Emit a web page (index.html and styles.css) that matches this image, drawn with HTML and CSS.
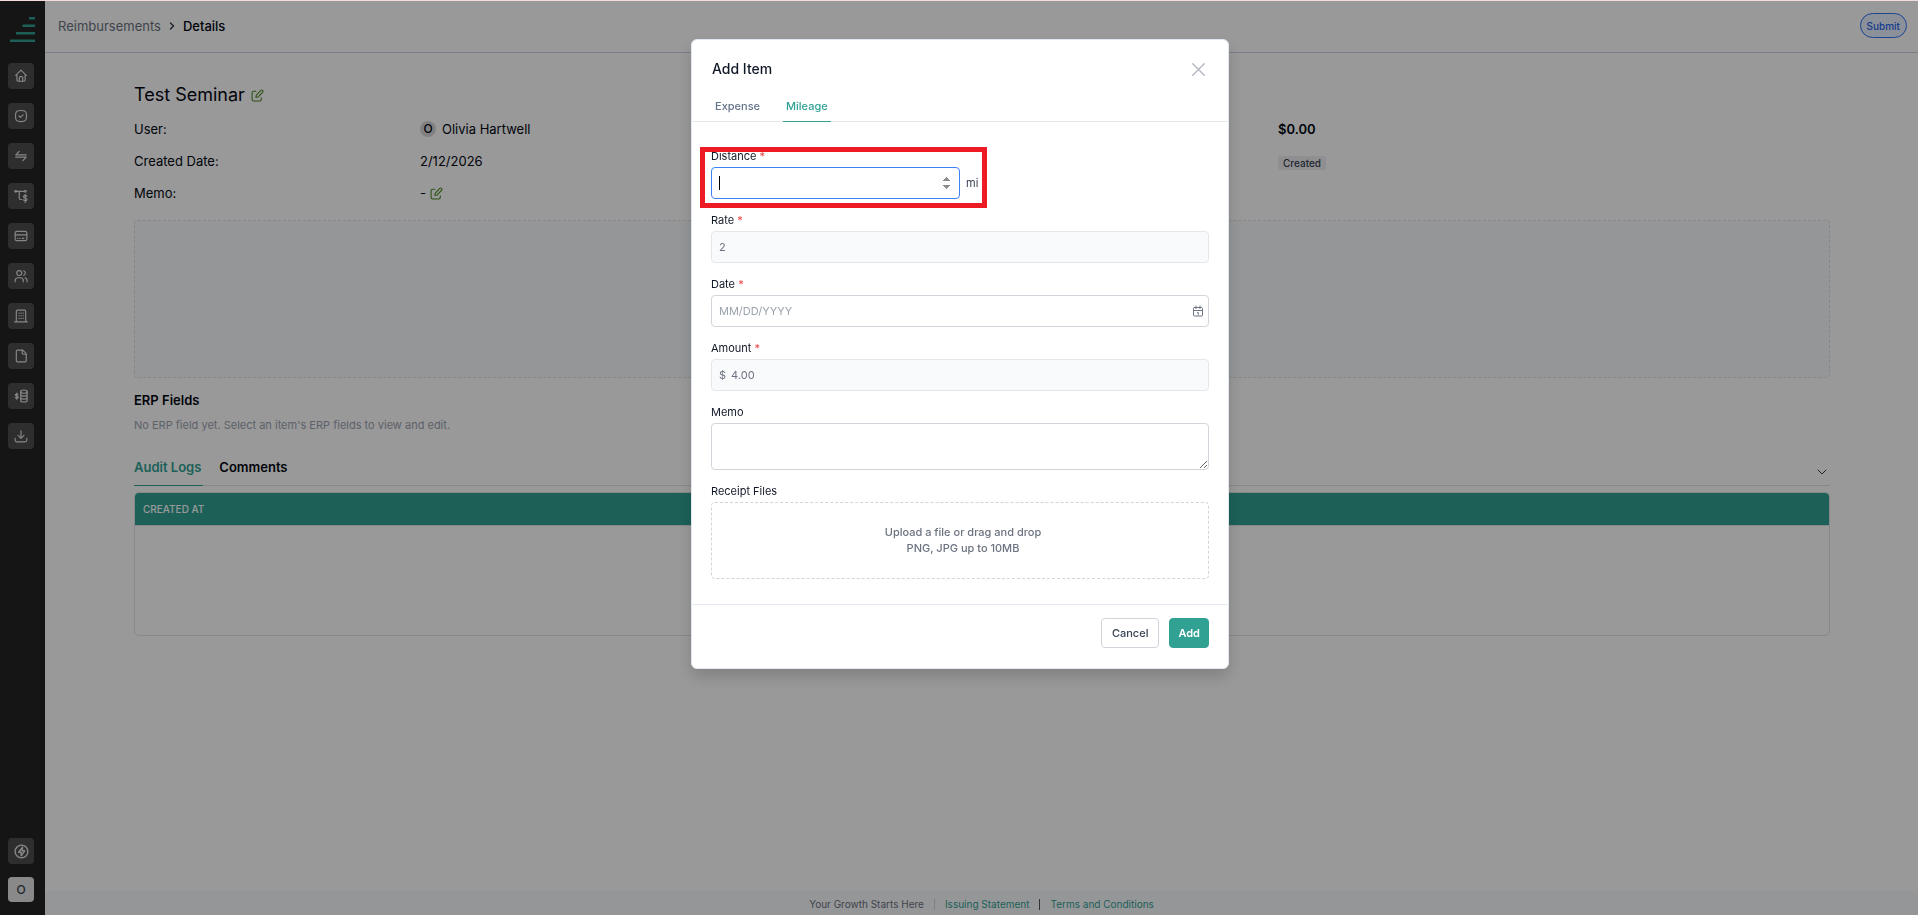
FILE: index.html
```html
<!DOCTYPE html>
<html lang="en">
<head>
<meta charset="utf-8">
<title>Reimbursement Details</title>
<link rel="stylesheet" href="styles.css">
</head>
<body>
<svg class="sprite" aria-hidden="true">
  <symbol id="i-edit" viewBox="0 0 24 24"><path d="M9 4H5a3 3 0 0 0-3 3v12a3 3 0 0 0 3 3h11a3 3 0 0 0 3-3v-3"/><path d="M9 15.500l.8-4.200L18 2.600a2 2 0 0 1 2.900 0l.6.600a2 2 0 0 1 0 2.800l-8.300 8.700z"/></symbol>
</svg>
<div class="app">
  <aside class="sidebar">
    <a class="logo" href="#" aria-label="Home page">
      <svg viewBox="0 0 25 25"><path d="M19 0h6v2.500h-6zM12.500 7.500H25V10H12.500zM6 15h19v2.500H6zM0 22.500h25V25H0z"/></svg>
    </a>
    <nav class="nav">
      <a class="tile" href="#" aria-label="Home"><svg viewBox="0 0 24 24"><path d="M5 11H3l9-9 9 9h-2v8a2 2 0 0 1-2 2H7a2 2 0 0 1-2-2z"/><path d="M9 21v-6a2 2 0 0 1 2-2h2a2 2 0 0 1 2 2v6"/></svg></a>
      <a class="tile" href="#" aria-label="Approvals"><svg viewBox="0 0 24 24"><path d="M12 2.500c7.600 0 9.500 1.900 9.500 9.500s-1.900 9.500-9.500 9.500S2.500 19.600 2.500 12 4.400 2.500 12 2.500z"/><path d="M8.500 12l2.500 2.500 4.500-4.500"/></svg></a>
      <a class="tile" href="#" aria-label="Transactions"><svg viewBox="0 0 24 24"><path d="M21 10H3l6-6M3 14h18l-6 6"/></svg></a>
      <a class="tile" href="#" aria-label="Payment flow"><svg viewBox="0 0 24 24"><path d="M2 4h17M9 4v12a2 2 0 0 0 2 2h2"/><circle cx="3" cy="4" r="1.500"/><circle cx="19.500" cy="4" r="1.500"/><path d="M22 12.500c-.5-1-1.500-1.500-2.800-1.500-1.700 0-2.900.8-2.900 2.200 0 3.200 6 1.400 6 4.700 0 1.400-1.300 2.300-3.100 2.300-1.500 0-2.600-.6-3.100-1.700M19.200 9v14"/></svg></a>
      <a class="tile" href="#" aria-label="Cards"><svg viewBox="0 0 24 24"><rect x="2" y="4" width="20" height="16" rx="3"/><path d="M2 10h20M6 16h.5M10 16h.5M14 16h3"/></svg></a>
      <a class="tile" href="#" aria-label="Users"><svg viewBox="0 0 24 24"><circle cx="9" cy="7" r="4.200"/><path d="M2 22v-2a5 5 0 0 1 5-5h4a5 5 0 0 1 5 5v2M16.500 3a4.200 4.200 0 0 1 0 8M22.500 22v-2a5 5 0 0 0-3.500-4.800"/></svg></a>
      <a class="tile" href="#" aria-label="Company"><svg viewBox="0 0 24 24"><path d="M1 22h22M4 22V4a2 2 0 0 1 2-2h12a2 2 0 0 1 2 2v18M8.500 7h.5M12 7h.5M15.500 7h.5M8.500 11.500h.5M12 11.500h.5M15.500 11.500h.5M8.500 16h.5M12 16h.5M15.500 16h.5"/></svg></a>
      <a class="tile" href="#" aria-label="Documents"><svg viewBox="0 0 24 24"><path d="M14 2v5a2 2 0 0 0 2 2h5"/><path d="M19 22H6a2 2 0 0 1-2-2V4a2 2 0 0 1 2-2h9l6 6v12a2 2 0 0 1-2 2z"/></svg></a>
      <a class="tile" href="#" aria-label="Funds"><svg viewBox="0 0 24 24"><ellipse cx="17" cy="4.500" rx="5.500" ry="2.800"/><path d="M11.500 4.500v15c0 1.500 2.500 2.800 5.500 2.800s5.500-1.300 5.500-2.800v-15M11.500 9.500c0 1.500 2.500 2.800 5.500 2.800s5.500-1.300 5.500-2.800M11.500 14.500c0 1.500 2.500 2.800 5.500 2.800s5.500-1.300 5.500-2.800"/><path d="M7 9.500c-.6-.8-1.400-1-2.300-1-1.400 0-2.400.6-2.400 1.700 0 2.500 5 1.200 5 3.800 0 1.200-1.100 1.800-2.600 1.800-1.200 0-2.200-.4-2.700-1.300M4.700 7v10.500"/></svg></a>
      <a class="tile" href="#" aria-label="Downloads"><svg viewBox="0 0 24 24"><path d="M2 16v3a3 3 0 0 0 3 3h14a3 3 0 0 0 3-3v-3M7 11l5 5 5-5M12 3v13"/></svg></a>
    </nav>
    <div class="side-end">
      <button class="tile tile-large" type="button" aria-label="Quick actions"><svg viewBox="0 0 24 24"><circle cx="12" cy="12" r="9"/><path d="M13.500 6L8 13h3.500v5l5-7H13z"/></svg></button>
      <button class="tile avatar" type="button">O</button>
    </div>
  </aside>

  <div class="page">
    <header class="topbar">
      <nav class="crumbs" aria-label="Breadcrumb">
        <a href="#">Reimbursements</a>
        <svg viewBox="0 0 24 24"><path d="M9 6l6 6-6 6"/></svg>
        <span class="here">Details</span>
      </nav>
      <button class="submit" type="button">Submit</button>
    </header>

    <main class="content">
      <h1 class="title">Test Seminar <button class="edit" type="button" aria-label="Edit title"><svg><use href="#i-edit"/></svg></button></h1>
      <div class="info">
        <span>User:</span>
        <span class="person"><i class="initial">O</i>Olivia Hartwell</span>
        <strong class="total">$0.00</strong>
        <span>Created Date:</span>
        <span>2/12/2026</span>
        <span class="total"><span class="badge">Created</span></span>
        <span>Memo:</span>
        <span class="person memo-value">-<button class="edit" type="button" aria-label="Edit memo"><svg><use href="#i-edit"/></svg></button></span>
      </div>
      <div class="items"></div>
      <h2 class="section">ERP Fields</h2>
      <p class="note">No ERP field yet. Select an item's ERP fields to view and edit.</p>
      <div class="log-tabs">
        <button class="log-tab active" type="button">Audit Logs</button>
        <button class="log-tab" type="button">Comments</button>
        <button class="collapse" type="button" aria-label="Collapse"><svg viewBox="0 0 24 24"><path d="M4 8l8 8 8-8"/></svg></button>
      </div>
      <div class="log">
        <table>
          <thead><tr><th scope="col">CREATED AT</th></tr></thead>
        </table>
      </div>
    </main>

    <footer class="footer">
      <span>Your Growth Starts Here</span>
      <i class="bar"></i>
      <a href="#">Issuing Statement</a>
      <i class="bar bar-dark"></i>
      <a href="#">Terms and Conditions</a>
    </footer>
  </div>
</div>

<div class="backdrop">
  <form class="modal" role="dialog" aria-labelledby="modal-title">
    <div class="modal-head">
      <h2 id="modal-title">Add Item</h2>
      <button class="close" type="button" aria-label="Close"><svg viewBox="0 0 12 12"><path d="M.7.700l10.600 10.600M11.300.700L.7 11.300"/></svg></button>
    </div>
    <div class="tabs">
      <button class="tab" type="button">Expense</button>
      <button class="tab active" type="button">Mileage</button>
    </div>
    <div class="fields">
      <div class="field distance">
        <label for="distance">Distance <b>*</b></label>
        <div class="with-unit">
          <div class="number">
            <input class="control" id="distance" type="number">
            <i class="caret"></i>
          </div>
          <span class="unit">mi</span>
        </div>
        <i class="highlight"></i>
      </div>
      <div class="field">
        <label for="rate">Rate <b>*</b></label>
        <input class="control" id="rate" type="text" value="2" disabled>
      </div>
      <div class="field">
        <label for="date">Date <b>*</b></label>
        <div class="control group">
          <input id="date" type="text" placeholder="MM/DD/YYYY">
          <svg viewBox="0 0 24 24"><rect x="3" y="5" width="18" height="17" rx="2"/><path d="M3 11h18M8 2v5M16 2v5M11 15h1.500v4"/></svg>
        </div>
      </div>
      <div class="field">
        <label for="amount">Amount <b>*</b></label>
        <div class="control group off">
          <span>$</span>
          <input id="amount" type="text" value="4.00" disabled>
        </div>
      </div>
      <div class="field">
        <label for="memo">Memo</label>
        <textarea class="control" id="memo"></textarea>
      </div>
      <div class="field">
        <label for="files">Receipt Files</label>
        <button class="drop" id="files" type="button">Upload a file or drag and drop<br>PNG, JPG up to 10MB</button>
      </div>
    </div>
    <div class="modal-foot">
      <button class="btn" type="button">Cancel</button>
      <button class="btn primary" type="button">Add</button>
    </div>
  </form>
</div>
</body>
</html>
```

FILE: styles.css
```css
* { box-sizing: border-box; }

body {
  margin: 0;
  border-top: 1px solid #f3dcdc;
  background: #fff;
  color: #030712;
  font: 14px/20px Inter, "Liberation Sans", sans-serif;
}

button, input, textarea { font: inherit; color: inherit; }
button { padding: 0; border: 0; background: none; cursor: pointer; }
a { color: inherit; text-decoration: none; }
svg { display: block; fill: none; stroke: currentColor; stroke-width: 2; stroke-linecap: round; stroke-linejoin: round; }
i { font-style: normal; }
.sprite { position: absolute; width: 0; height: 0; }

.app { display: flex; min-height: calc(100vh - 1px); }

/* Sidebar */
.sidebar {
  display: flex;
  flex-direction: column;
  align-items: flex-start;
  width: 45px;
  padding: 16px 8px 13px;
  background: #232323;
}
.logo { margin: 0 2px 21px; }
.logo svg { width: 25px; height: 25px; fill: #30a193; stroke: none; }
.nav { display: grid; gap: 14px; }
.side-end { display: grid; gap: 13px; margin-top: auto; }
.tile {
  display: grid;
  place-items: center;
  width: 26px;
  height: 26px;
  border-radius: 4px;
  background: #4e4e4e;
  color: #e0e0e0;
}
.tile svg { width: 14px; height: 14px; }
.tile-large svg { width: 17px; height: 17px; }
.avatar { height: 25px; background: #e5e5e5; color: #374151; font-size: 12px; font-weight: 500; }

/* Page */
.page { display: flex; flex: 1; flex-direction: column; min-width: 0; }
.topbar {
  display: flex;
  align-items: center;
  justify-content: space-between;
  height: 52px;
  padding: 0 11px 2px 13px;
  border-bottom: 1px solid #cbd5e1;
}
.crumbs { display: flex; align-items: center; gap: 5px; font-size: 13px; color: #6b7280; }
.crumbs svg { width: 12px; height: 12px; color: #374151; stroke-width: 3; }
.here { color: #030712; font-weight: 500; }
.submit {
  height: 25px;
  padding: 0 6px;
  border: 1px solid #2f74f5;
  border-radius: 13px;
  background: #e8f0ff;
  color: #2563eb;
  font-size: 10px;
  font-weight: 500;
}

.content { flex: 1; padding: 28px 88px 0 89px; }
.title { display: flex; align-items: center; gap: 6px; margin: 0 0 10px; font-size: 18px; line-height: 28px; font-weight: 400; }
.edit { color: #4d8a20; }
.edit svg { width: 13px; height: 13px; stroke-width: 2; }
.info { display: grid; grid-template-columns: repeat(6, 1fr); gap: 12px 20px; font-size: 13px; }
.info > :nth-child(3n + 1) { grid-column: 1; }
.person { display: flex; align-items: center; gap: 6px; }
.memo-value { gap: 4px; }
.initial { width: 16px; border-radius: 8px; background: #d8d8d8; font-size: 12px; line-height: 16px; font-weight: 500; text-align: center; }
.info > .total { grid-column: 5; font-weight: 600; }
.badge { display: inline-block; padding: 0 5px; border-radius: 3px; background: #eeeff2; color: #374151; font-size: 10px; line-height: 14px; font-weight: 500; vertical-align: -1px; }
.items { height: 158px; margin-top: 17px; border: 1px dashed #e0e2e6; border-radius: 4px; background: #f8fafc; }
.section { margin: 12px 0 6px; font-size: 13px; line-height: 20px; font-weight: 600; }
.note { margin: 0; color: #9ca3af; font-size: 11px; line-height: 18px; }
.log-tabs { display: flex; gap: 16px; margin-top: 22px; border-bottom: 1px solid #e1e3e6; }
.log-tab { height: 30px; margin-bottom: -1px; padding: 0 2px 8px 0; border-bottom: 1px solid transparent; font-size: 13px; font-weight: 600; }
.log-tab.active { border-color: #30a193; color: #30a193; }
.collapse { margin-left: auto; padding: 2px 2px 0 0; color: #374151; }
.collapse svg { width: 12px; height: 12px; }
.log { height: 144px; margin-top: 6px; overflow: hidden; border: 1px solid #e1e3e6; border-radius: 5px; }
.log table { width: 100%; border-spacing: 0; }
.log th { height: 33px; padding: 0 8px; border-bottom: 1px solid #e1e3e6; background: #30a193; color: #fff; font-size: 10px; font-weight: 500; text-align: left; }

.footer { display: flex; align-items: center; justify-content: center; gap: 10px; height: 24px; padding-top: 2px; background: #f8fafc; color: #6b7280; font-size: 10px; }
.footer a { color: #30a193; }
.bar { width: 1px; height: 11px; background: #cbd5e1; }
.bar-dark { background: #4b5563; }

/* Dialog */
.backdrop {
  position: fixed;
  inset: 1px 0 0;
  display: flex;
  align-items: flex-start;
  justify-content: center;
  padding: 38px 0 0 2px;
  background: rgba(0, 0, 0, .4);
}
.modal {
  width: 538px;
  border: 1px solid #e2e8f0;
  border-radius: 6px;
  background: #fff;
  box-shadow: 0 8px 16px rgba(0, 0, 0, .16);
  color: #111827;
  font-size: 12px;
}
.modal-head { display: flex; align-items: center; justify-content: space-between; padding: 19px 23px 0 20px; }
.modal-head h2 { margin: 0; font-size: 14px; font-weight: 500; }
.close { color: #b0b4be; }
.close svg { width: 13px; height: 13px; stroke-width: 1.200; }
.tabs { display: flex; gap: 20px; margin-top: 18px; padding: 0 20px; border-bottom: 1px solid #e5e7eb; }
.tab { height: 25px; margin-bottom: -1px; padding: 1px 3px 7px; border-bottom: 1px solid transparent; color: #64748b; font-size: 11px; line-height: 16px; font-weight: 500; }
.tab.active { border-color: #30a193; color: #30a193; }

.fields { display: grid; gap: 12px; padding: 25px 19px; }
.field { display: grid; font-size: 11px; }
.field label { padding-bottom: 2px; line-height: 18px; }
.field b { color: #ef4444; font-weight: 400; }
.control {
  width: 100%;
  height: 32px;
  padding: 0 7px;
  border: 1px solid #d1d5db;
  border-radius: 4px;
  background: #fff;
  outline: 0;
}
.control:disabled, .off { border-color: #e5e7eb; background: #f9fafb; color: #6b7280; }
.group { display: flex; align-items: center; gap: 5px; padding-right: 4px; }
.group input { flex: 1; min-width: 0; padding: 0; border: 0; outline: 0; background: none; color: inherit; }
.group svg { width: 12px; height: 12px; color: #6b7280; }
::placeholder { color: #9ca3af; opacity: 1; }
textarea.control { display: block; height: 47px; resize: vertical; }

.distance { position: relative; }
.with-unit { display: flex; align-items: center; gap: 6px; }
.number { position: relative; width: 50%; }
.number .control { padding-right: 5px; border-color: #3b82f6; }
.number input::-webkit-inner-spin-button { opacity: 1; }
.caret { position: absolute; top: 9px; left: 8px; width: 1px; height: 14px; background: #000; }
.unit { color: #374151; }
.highlight { position: absolute; inset: 0 auto auto -11px; width: 287px; height: 61px; border: 5px solid #ed1c24; pointer-events: none; }

.drop { height: 77px; padding: 0 0 2px 6px; border: 1px dashed #d1d5db; border-radius: 4px; color: #6b7280; line-height: 16px; font-weight: 500; }
.modal-foot { display: flex; justify-content: flex-end; gap: 10px; padding: 13px 19px 20px; border-top: 1px solid #e2e8f0; }
.btn { height: 30px; padding: 0 10px; border: 1px solid #d1d5db; border-radius: 4px; color: #374151; font-size: 11px; font-weight: 500; }
.primary { padding: 0 8px; border-color: #30a193; background: #30a193; color: #fff; font-weight: 600; }
```
